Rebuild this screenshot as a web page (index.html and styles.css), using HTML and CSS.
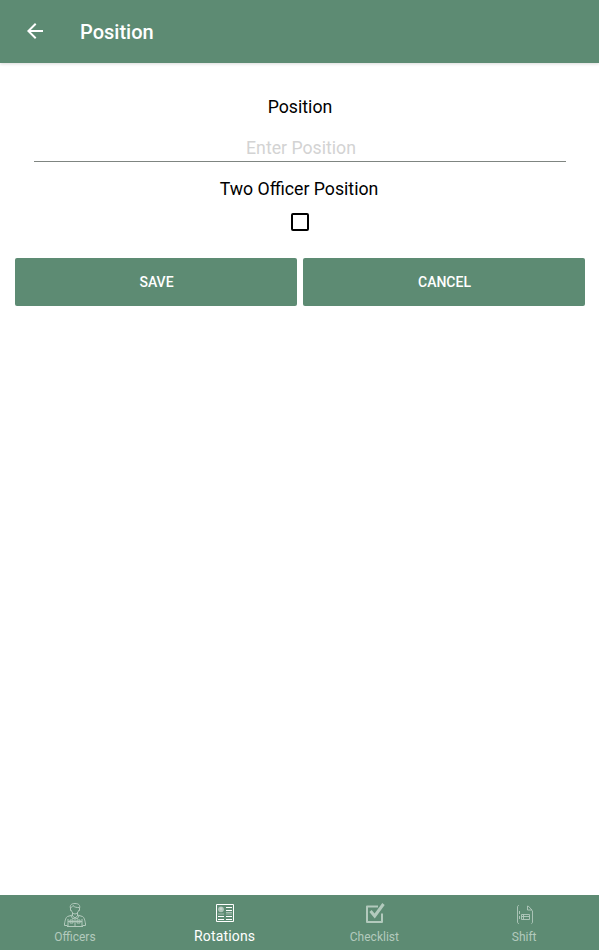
FILE: index.html
```html
<!DOCTYPE html>
<html lang="en">
<head>
<meta charset="utf-8">
<title>Position</title>
<link rel="stylesheet" href="styles.css">
</head>
<body>
<header class="app-bar">
  <svg class="back" viewBox="0 0 24 24"><path d="M20 11H7.83l5.59-5.59L12 4l-8 8 8 8 1.41-1.41L7.83 13H20z"/></svg>
  <h1 class="title">Position</h1>
</header>
<main class="form">
  <label class="label" for="position">Position</label>
  <input class="field" id="position" type="text" placeholder="Enter Position">
  <label class="label label-two" for="two">Two Officer Position</label>
  <input class="check" id="two" type="checkbox">
  <div class="actions">
    <button class="button">SAVE</button>
    <button class="button">CANCEL</button>
  </div>
</main>
<nav class="tabs">
  <a class="tab">
    <svg class="icon" viewBox="0 0 24 24" fill="none" stroke="currentColor">
      <path d="M7.500 6.500C6.500 3 8.500 1.500 12 1.500s5.500 1.500 4.500 5M7.500 5.500C9 5.500 9.500 4 10 3.500c1.500 2 4 2 6 2M7.500 5.500v3h1c.3 2 2 3.500 3.500 3.500s3.200-1.500 3.500-3.500h1v-3M9.500 11v3l2.500 2 2.500-2v-3M9.500 13 4.500 14.500c-1.500.5-2.500 4-3 7.500v1.500h3M14.500 13l5 1.500c1.500.5 2.500 4 3 7.500v1.500h-3M5 17v7.500h14V17M5 19.500h14M4 24.500h16M8 14l2 3 2-1.500 2 1.500 2-3M12 16v8M7 18h3v3H7zM14 18h3v3h-3z"/>
    </svg>
    <span class="name">Officers</span>
  </a>
  <a class="tab tab-active">
    <svg class="icon" viewBox="0 0 24 24" fill="none" stroke="currentColor">
      <path d="M3.500 2.500h17v17h-17zM13 5.500h6M13 8.500h6M5 14.500h6M5 17.500h6M13 14.500h6M13 17.500h6"/>
      <path opacity=".45" d="M13 10.500h6M13 12h6M5 12h6"/>
      <circle cx="8" cy="7.300" r="2.900" fill="currentColor" stroke="none" opacity=".5"/>
      <circle cx="8" cy="6.700" r="1.400" fill="currentColor" stroke="none" opacity=".3"/>
    </svg>
    <span class="name">Rotations</span>
  </a>
  <a class="tab">
    <svg class="icon icon-shifted" viewBox="0 0 24 24" fill="none" stroke="currentColor">
      <path stroke-width="2" stroke-linejoin="round" d="M15 4.500H4v15.500h15V11.500"/>
      <path stroke-width="3" d="m7.500 9 4.200 5L20.500 2"/>
    </svg>
    <span class="name">Checklist</span>
  </a>
  <a class="tab">
    <svg class="icon icon-shifted" viewBox="0 0 24 24" fill="none" stroke="currentColor" stroke-width=".9">
      <path d="M6 3.500c-1 0-1.500.5-1.500 1.500v15c0 1 .5 1.500 1.500 1.500M14.500 4v4h4.500L15.200 4h-.7M18.500 8l1 .8V20c0 1-.5 1.500-1.200 1.500M8.500 12.500h8v5h-8zM8.500 14.500h8M10.500 12.500v5"/>
      <path stroke-dasharray="3 2" d="M6.500 9V19"/>
    </svg>
    <span class="name">Shift</span>
  </a>
</nav>
</body>
</html>
```

FILE: styles.css
```css
* { box-sizing: border-box; }
body {
  margin: 0;
  height: 950px;
  display: flex;
  flex-direction: column;
  background: #fff;
  color: #000;
  font-family: Roboto, sans-serif;
}
.app-bar {
  height: 63px;
  display: flex;
  align-items: center;
  padding-left: 23px;
  background: #5d8b73;
  color: #fff;
  box-shadow: 0 1px 3px rgba(0, 0, 0, .15);
}
.back { width: 24px; height: 24px; margin: -2px 33px 0 0; fill: currentColor; }
.title { margin: 0; font-size: 20px; font-weight: 500; line-height: 24px; }
.form {
  flex: 1;
  display: flex;
  flex-direction: column;
  align-items: center;
  padding: 33px 14px 0 15px;
}
.label { font-size: 17.7px; line-height: 22px; }
.field {
  width: 532px;
  height: 28px;
  margin: 16px 0;
  padding: 0 0 0 2px;
  border: 0;
  border-bottom: 1px solid #7f8581;
  font: 17.7px/22px Roboto, sans-serif;
  text-align: center;
}
.field::placeholder { color: #d3d3d3; opacity: 1; }
.label-two { margin-right: 2px; }
.check {
  appearance: none;
  width: 18px;
  height: 18px;
  margin: 13px 0 27px;
  border: 2px solid #000;
  border-radius: 2px;
}
.actions { display: flex; gap: 6px; width: 100%; }
.button {
  flex: 1;
  height: 48px;
  padding: 0 0 0 1px;
  border: 0;
  border-radius: 2px;
  background: #5d8b73;
  color: #fff;
  font: 500 14px/20px Roboto, sans-serif;
}
.tabs { display: flex; height: 55px; background: #5d8b73; color: #fff; }
.tab {
  flex: 1;
  display: flex;
  flex-direction: column;
  align-items: center;
  padding-top: 7px;
  color: #b3cabd;
  font-size: 12px;
}
.tab-active { color: #fff; font-size: 14px; letter-spacing: .15px; }
.icon { width: 24px; height: 24px; overflow: visible; }
.icon-shifted { margin-left: 2px; }
.name { line-height: 16px; margin-top: 3px; }
.tab-active .name { margin-top: 2px; }
```
